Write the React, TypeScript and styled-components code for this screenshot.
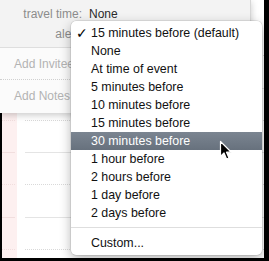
import React from "react";
import styled, { createGlobalStyle } from "styled-components";

const Global = createGlobalStyle`
  html, body { margin: 0; padding: 0; background: #000; }
  body { font-family: "Liberation Sans", Arial, sans-serif; }
`;

const Frame = styled.div`
  position: relative;
  width: 269px;
  height: 261px;
  box-sizing: border-box;
  padding: 0 5px 3px 2px;
  background: #000;
  overflow: hidden;
`;

const Calendar = styled.div`
  display: flex;
  height: 100%;
  background: #fff;
`;

const WeekendCol = styled.div`
  width: 15px;
  background: #fdf0f0;
  padding-top: 24px;
  box-sizing: border-box;
`;

const Gutter = styled.div`
  width: 8px;
`;

const DayCol = styled.div`
  flex: 1;
  padding-top: 24px;
  box-sizing: border-box;
`;

const Slot = styled.div<{ $dotted: boolean; $tint?: boolean }>`
  height: 32.25px;
  box-sizing: border-box;
  border-bottom: 1px ${(p) => (p.$dotted ? "dotted" : "solid")}
    ${(p) => (p.$tint ? "#f1dede" : p.$dotted ? "#d9d9d9" : "#e4e4e4")};
  margin-right: ${(p) => (p.$tint ? "2px" : "0")};
`;

const Popover = styled.div`
  position: absolute;
  left: 0;
  top: 0;
  width: 250px;
  height: 113px;
  background: #fbfbfb;
  border-right: 1px solid #d6d6d6;
  box-shadow: 0 2px 7px rgba(0, 0, 0, 0.22);
  font-size: 12px;
`;

const DetailTop = styled.div`
  height: 48px;
  box-sizing: border-box;
  padding-top: 4px;
  background: #f3f3f3;
  border-bottom: 1px solid #dedede;
`;

const DetailRow = styled.div`
  display: grid;
  grid-template-columns: 82px 1fr;
  column-gap: 7px;
  height: 20px;
  align-items: center;
`;

const Label = styled.span`
  text-align: right;
  color: #8c8c8c;
`;

const Value = styled.span`
  color: #2a2a2a;
`;

const AddRow = styled.div<{ $divider?: boolean }>`
  height: 32px;
  box-sizing: border-box;
  display: flex;
  align-items: center;
  padding-left: 14px;
  color: #b3b3b3;
  border-bottom: ${(p) => (p.$divider ? "1px dotted #d0d0d0" : "none")};
`;

const Menu = styled.div`
  position: absolute;
  left: 71px;
  top: 21px;
  width: 191px;
  box-sizing: border-box;
  padding: 3px 0;
  background: #fff;
  border-radius: 5px;
  box-shadow: 0 0 0 0.5px rgba(0, 0, 0, 0.15), 0 4px 12px rgba(0, 0, 0, 0.3);
  font-size: 12.4px;
`;

const Item = styled.div<{ $active?: boolean }>`
  display: flex;
  align-items: center;
  height: 18px;
  color: ${(p) => (p.$active ? "#fff" : "#111")};
  background: ${(p) =>
    p.$active ? "linear-gradient(#7b8591, #67717d)" : "transparent"};
  white-space: nowrap;
`;

const CheckSlot = styled.span`
  width: 20px;
  box-sizing: border-box;
  padding-left: 5px;
  font-family: "DejaVu Sans", sans-serif;
  font-size: 14px;
  font-weight: bold;
  line-height: 18px;
  color: #000;
`;

const Separator = styled.div`
  height: 1px;
  margin: 5px 0 6px;
  background: #dedede;
`;

const Cursor = styled.svg`
  position: absolute;
  left: 219px;
  top: 140px;
`;

const items = [
  "15 minutes before (default)",
  "None",
  "At time of event",
  "5 minutes before",
  "10 minutes before",
  "15 minutes before",
  "30 minutes before",
  "1 hour before",
  "2 hours before",
  "1 day before",
  "2 days before",
];

const slots = [0, 1, 2, 3, 4, 5, 6, 7];

export default function App() {
  return (
    <>
      <Global />
      <Frame>
        <Calendar>
          <WeekendCol>
            {slots.map((k) => (
              <Slot key={k} $dotted={k % 2 === 0} $tint />
            ))}
          </WeekendCol>
          <Gutter />
          <DayCol>
            {slots.map((k) => (
              <Slot key={k} $dotted={k % 2 === 0} />
            ))}
          </DayCol>
        </Calendar>
        <Popover>
          <DetailTop>
            <DetailRow>
              <Label>travel time:</Label>
              <Value>None</Value>
            </DetailRow>
            <DetailRow>
              <Label>alert:</Label>
              <Value />
            </DetailRow>
          </DetailTop>
          <AddRow $divider>Add Invitees</AddRow>
          <AddRow>Add Notes</AddRow>
        </Popover>
        <Menu>
          {items.map((t, i) => (
            <Item key={t} $active={i === 6}>
              <CheckSlot>{i === 0 ? "✓" : ""}</CheckSlot>
              {t}
            </Item>
          ))}
          <Separator />
          <Item>
            <CheckSlot />
            Custom...
          </Item>
        </Menu>
        <Cursor width="14" height="21" viewBox="0 0 14 21">
          <path
            d="M1.5 1.5 L1.5 16.5 L5 13 L7.6 19 L10 18 L7.5 12.2 L12.3 12.2 Z"
            fill="#000"
            stroke="#fff"
            strokeWidth="1.2"
            strokeLinejoin="round"
          />
        </Cursor>
      </Frame>
    </>
  );
}
